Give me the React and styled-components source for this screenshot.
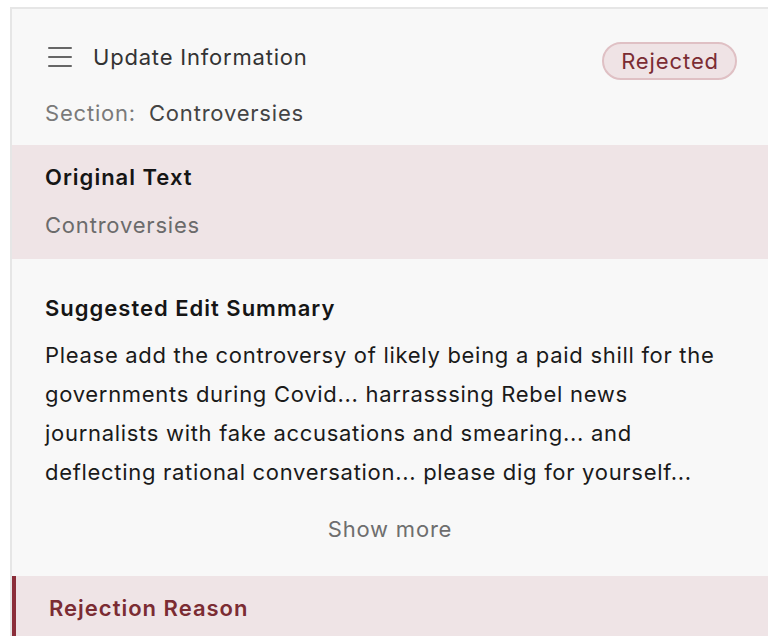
import React from "react";
import styled, { createGlobalStyle } from "styled-components";

const GlobalStyle = createGlobalStyle`
  html, body {
    margin: 0;
    padding: 0;
    background: #ffffff;
    font-family: Inter, "Noto Sans", sans-serif;
    -webkit-font-smoothing: antialiased;
  }
`;

const Page = styled.div`
  padding: 7px 0 0 10px;
  height: 636px;
  box-sizing: border-box;
  overflow: hidden;
`;

const Card = styled.div`
  background: #f8f8f8;
  border-top: 2px solid #e6e6e6;
  border-left: 2px solid #e6e6e6;
  min-height: 700px;
`;

const Header = styled.div`
  padding: 33px 31px 17px 33px;
`;

const TopRow = styled.div`
  display: flex;
  align-items: center;
  justify-content: space-between;
  height: 38px;
`;

const TitleGroup = styled.div`
  display: flex;
  align-items: center;
  gap: 21px;
  margin-bottom: 8px;
`;

const MenuIcon = styled.span`
  display: flex;
  flex-direction: column;
  gap: 7px;
  width: 24px;
  margin-left: 3px;
  span {
    display: block;
    height: 2px;
    background: #666;
    border-radius: 1px;
  }
`;

const Title = styled.div`
  font-size: 22px;
  letter-spacing: 0.8px;
  color: #333;
`;

const Badge = styled.div`
  height: 38px;
  box-sizing: border-box;
  display: flex;
  align-items: center;
  padding: 0 16px 0 17px;
  border-radius: 19px;
  background: #efe3e5;
  border: 2px solid #dfc0c4;
  color: #7b2c33;
  font-size: 22px;
  letter-spacing: 0.9px;
`;

const SectionLine = styled.div`
  margin-top: 18px;
  line-height: 30px;
  font-size: 22px;
  letter-spacing: 0.8px;
  color: #444;
  span {
    color: #7a7a7a;
    margin-right: 13px;
  }
`;

const Block = styled.div`
  background: ${({ $tint }) => ($tint ? "#efe4e6" : "transparent")};
  border-left: ${({ $accent }) => ($accent ? "4px solid #8b2e3a" : "none")};
  padding: ${({ $pad }) => $pad};
`;

const BlockTitle = styled.div`
  font-size: 22px;
  line-height: 28px;
  font-weight: 600;
  letter-spacing: 1px;
  color: ${({ $color }) => $color || "#151515"};
`;

const Muted = styled.div`
  margin-top: 19px;
  font-size: 22px;
  line-height: 30px;
  letter-spacing: 0.8px;
  color: #6b6b6b;
`;

const Body = styled.p`
  margin: 14px 0 0;
  font-size: 22px;
  line-height: 39px;
  letter-spacing: 0.7px;
  color: #1a1a1a;
`;

const ShowMore = styled.div`
  margin-top: 22px;
  text-align: center;
  font-size: 22px;
  line-height: 30px;
  letter-spacing: 0.8px;
  color: #6e6e6e;
`;

export default function App() {
  return (
    <>
      <GlobalStyle />
      <Page>
        <Card>
          <Header>
            <TopRow>
              <TitleGroup>
                <MenuIcon>
                  <span />
                  <span />
                  <span />
                </MenuIcon>
                <Title>Update Information</Title>
              </TitleGroup>
              <Badge>Rejected</Badge>
            </TopRow>
            <SectionLine>
              <span>Section:</span>Controversies
            </SectionLine>
          </Header>
          <Block $tint $pad="18px 33px 19px 33px">
            <BlockTitle>Original Text</BlockTitle>
            <Muted>Controversies</Muted>
          </Block>
          <Block $pad="35px 33px 32px 33px">
            <BlockTitle>Suggested Edit Summary</BlockTitle>
            <Body>
              Please add the controversy of likely being a paid shill for the
              governments during Covid... harrasssing Rebel news journalists
              with fake accusations and smearing... and deflecting rational
              conversation... please dig for yourself...
            </Body>
            <ShowMore>Show more</ShowMore>
          </Block>
          <Block $tint $accent $pad="18px 33px 20px 33px">
            <BlockTitle $color="#7b2c33">Rejection Reason</BlockTitle>
          </Block>
        </Card>
      </Page>
    </>
  );
}
